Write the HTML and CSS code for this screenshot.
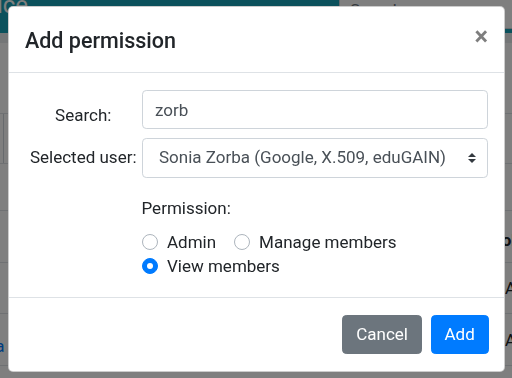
FILE: index.html
```html
<!DOCTYPE html>
<html lang="en">
<head>
    <meta charset="UTF-8">
    <meta name="viewport" content="width=device-width, initial-scale=1.0">
    <title>Add permission</title>
    <link rel="stylesheet" href="styles.css">
</head>
<body>
    <div class="page">
        <header class="navbar">
            <span class="brand">Service</span>
            <input class="nav-search" type="text" placeholder="Search">
        </header>
        <div class="crumbs"></div>
        <div class="table">
            <div class="trow first"><span class="left-box"></span></div>
            <div class="trow r2"></div>
            <div class="trow r3"><span class="right-text head">Role</span></div>
            <div class="trow r4"><span class="right-text">Admin</span></div>
            <div class="trow r5"><a class="left-link" href="#">Sonia</a><span class="right-text">Admin</span></div>
            <div class="trow r6"></div>
        </div>
    </div>

    <div class="backdrop"></div>

    <div class="modal">
        <div class="modal-content">
            <div class="modal-header">
                <h5 class="modal-title">Add permission</h5>
                <button type="button" class="close">&times;</button>
            </div>
            <div class="modal-body">
                <div class="form-row">
                    <label class="col-label search-label" for="search">Search:</label>
                    <input type="text" id="search" class="form-control" value="zorb">
                </div>
                <div class="form-row">
                    <label class="col-label" for="user">Selected user:</label>
                    <div class="select-wrap">
                        <select id="user" class="form-control custom-select">
                            <option>Sonia Zorba (Google, X.509, eduGAIN)</option>
                        </select>
                        <svg class="select-arrow" width="8" height="10" viewBox="0 0 4 5"><path fill="#343a40" d="M2 0L0 2h4zm0 5L0 3h4z"/></svg>
                    </div>
                </div>
                <div class="form-row perm-row">
                    <span></span>
                    <div class="perm">
                        <div class="perm-label">Permission:</div>
                        <div class="radios">
                            <label class="radio"><span class="circle"></span>Admin</label>
                            <label class="radio"><span class="circle"></span>Manage members</label>
                            <label class="radio"><span class="circle checked"></span>View members</label>
                        </div>
                    </div>
                </div>
            </div>
            <div class="modal-footer">
                <button type="button" class="btn btn-secondary">Cancel</button>
                <button type="button" class="btn btn-primary">Add</button>
            </div>
        </div>
    </div>
</body>
</html>
```

FILE: styles.css
```css
body {
    margin: 0;
    font-family: Roboto, "Liberation Sans", Arial, sans-serif;
    font-size: 17px;
    color: #212529;
    background-color: #ffffff;
    overflow: hidden;
    height: 378px;
}
.page {
    height: 378px;
}
.navbar {
    height: 33px;
    background-color: #17a2b8;
    display: flex;
    align-items: flex-end;
    padding-bottom: 4px;
    box-sizing: border-box;
}
.brand {
    align-self: flex-start;
    margin-top: -10px;
    margin-left: -50px;
    font-size: 24px;
    line-height: 30px;
    color: #ffffff;
}
.nav-search {
    margin-left: auto;
    margin-right: -20px;
    width: 193px;
    height: 38px;
    box-sizing: border-box;
    border: 1px solid #ced4da;
    border-radius: 4px;
    padding: 6px 10px;
    font-family: inherit;
    font-size: 17px;
    background-color: #ffffff;
}
.nav-search::placeholder {
    color: #6c757d;
}
.crumbs {
    height: 10px;
    background-color: #e9ecef;
}
.table {
    margin-top: 70px;
}
.trow {
    height: 50px;
    border-top: 1px solid #dee2e6;
    box-sizing: border-box;
    display: flex;
    align-items: center;
    position: relative;
}
.r2 { height: 47px; }
.r3 { height: 52px; }
.r4 { height: 51px; }
.r5 { height: 52px; }
.left-box {
    width: 3px;
    height: 100%;
    border-right: 1px solid #ced4da;
}
.left-link {
    margin-left: -38px;
    color: #007bff;
    text-decoration: none;
    padding-top: 12px;
}
.right-text {
    margin-left: auto;
    margin-right: -40px;
    width: 47px;
}
.right-text.head {
    font-weight: bold;
    width: 60px;
    text-align: right;
    margin-right: -13px;
    padding-top: 6px;
}

.backdrop {
    position: fixed;
    inset: 0;
    background-color: rgba(0, 0, 0, 0.5);
}
.modal {
    position: fixed;
    inset: 0;
    padding: 6px 0 0 8px;
}
.modal-content {
    width: 497px;
    box-sizing: border-box;
    background-color: #ffffff;
    border: 1px solid rgba(0, 0, 0, 0.2);
    border-radius: 5px;
}
.modal-header {
    display: flex;
    align-items: flex-start;
    padding: 18px 16px 16px;
    border-bottom: 1px solid #dee2e6;
}
.modal-title {
    margin: 0;
    font-size: 21.5px;
    font-weight: 500;
    line-height: 31px;
}
.close {
    margin: -18px -16px -16px auto;
    padding: 17px 16px;
    background: transparent;
    border: none;
    font-family: inherit;
    font-size: 25.5px;
    font-weight: 700;
    line-height: 1;
    color: #000000;
    opacity: 0.5;
}
.modal-body {
    padding: 17px 16px 18px;
    display: flex;
    flex-direction: column;
    gap: 9px;
}
.form-row {
    display: grid;
    grid-template-columns: 116.5px 1fr;
    align-items: start;
}
.col-label {
    text-align: center;
    padding-top: 7px;
    line-height: 25.5px;
}
.search-label {
    padding-top: 13px;
}
.form-control {
    display: block;
    width: 100%;
    height: 39px;
    box-sizing: border-box;
    padding: 6px 12.5px;
    font-family: inherit;
    font-size: 17px;
    line-height: 25.5px;
    color: #495057;
    background-color: #ffffff;
    border: 1px solid #ced4da;
    border-radius: 4.25px;
}
.select-wrap {
    position: relative;
}
.custom-select {
    appearance: none;
    -webkit-appearance: none;
    height: 40px;
    padding-left: 16.5px;
}
.select-arrow {
    position: absolute;
    right: 12px;
    top: 15px;
}
.perm-row {
    margin-top: 9px;
}
.perm-label {
    line-height: 24.5px;
    margin-bottom: 9px;
}
.radios {
    display: flex;
    flex-wrap: wrap;
    column-gap: 17.5px;
}
.radio {
    display: flex;
    align-items: center;
    line-height: 24.5px;
}
.circle {
    width: 16px;
    height: 16px;
    box-sizing: border-box;
    border: 1px solid #adb5bd;
    border-radius: 50%;
    margin-right: 9.5px;
    position: relative;
}
.circle.checked {
    background-color: #007bff;
    border-color: #007bff;
}
.circle.checked::after {
    content: "";
    position: absolute;
    left: 4px;
    top: 4px;
    width: 6px;
    height: 6px;
    border-radius: 50%;
    background-color: #ffffff;
}
.modal-footer {
    display: flex;
    justify-content: flex-end;
    gap: 9px;
    padding: 17px 15.5px 17px;
    border-top: 1px solid #dee2e6;
}
.btn {
    height: 39.5px;
    padding: 0 12.75px;
    font-family: inherit;
    font-size: 17px;
    color: #ffffff;
    border: 1px solid transparent;
    border-radius: 4.25px;
}
.btn-secondary {
    background-color: #6c757d;
    border-color: #6c757d;
}
.btn-primary {
    background-color: #007bff;
    border-color: #007bff;
}
```
